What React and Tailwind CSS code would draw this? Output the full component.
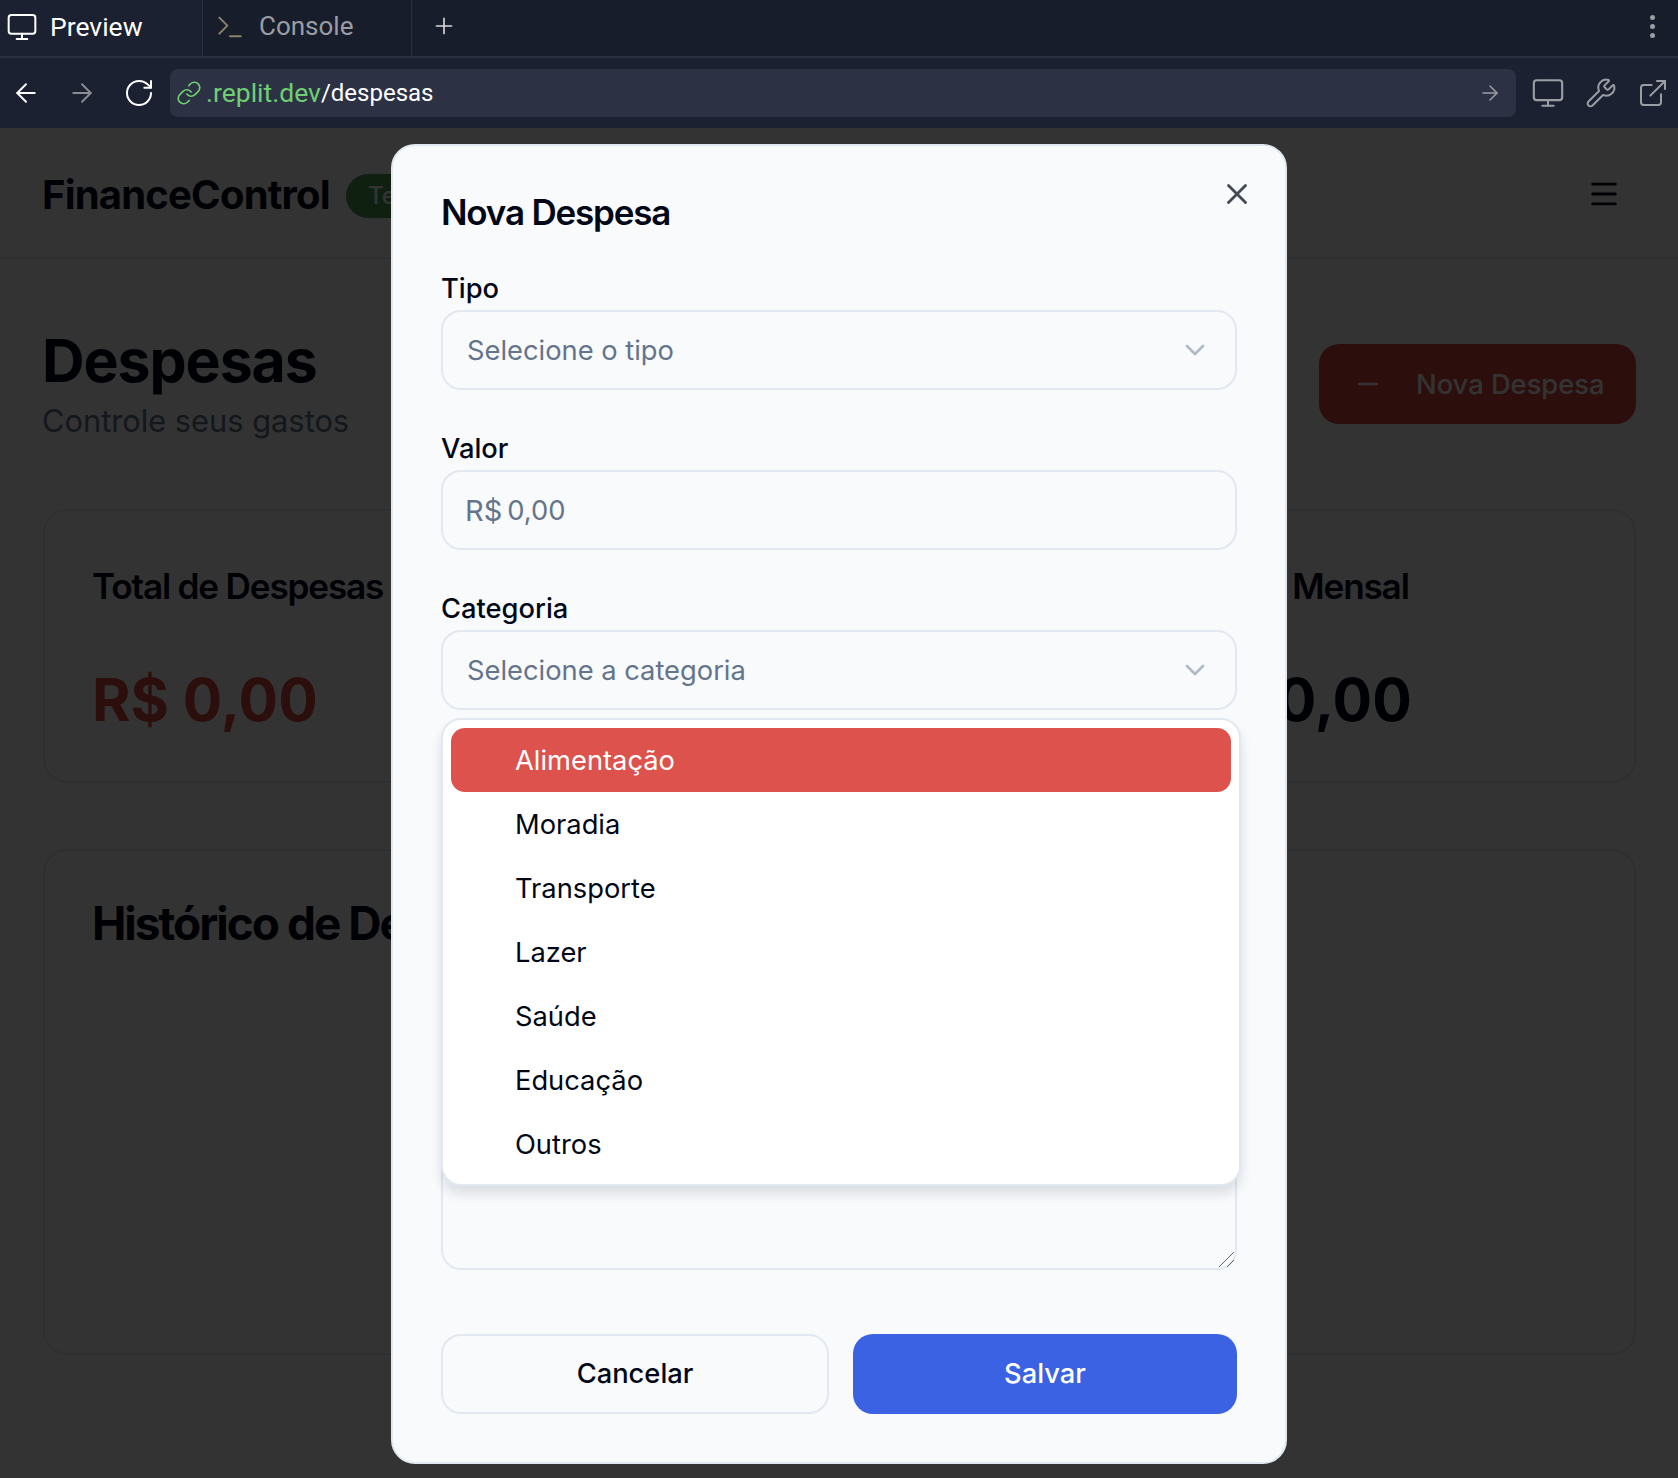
import { ArrowLeft, ArrowRight, ChevronDown, ExternalLink, Link, Menu, Minus, Monitor, Plus, RotateCw, Terminal, Wrench, X } from 'lucide-react';

const categorias = ['Alimentação', 'Moradia', 'Transporte', 'Lazer', 'Saúde', 'Educação', 'Outros'];

const Field = ({ label, children }) => (
    <div>
        <label className="block h-[40px] text-[27.3px] leading-[38px] font-medium text-[#020817]">{label}</label>
        {children}
    </div>
);

const SelectBox = ({ placeholder }) => (
    <div className="h-[80px] pl-[24px] pr-[24px] flex items-center justify-between rounded-[20px] border-2 border-[#e2e8f0] text-[27.3px] text-[#64748b]">
        <span className="pt-[2px]">{placeholder}</span>
        <ChevronDown size={32} strokeWidth={2} className="text-[#b1b9c6]" />
    </div>
);

const BrowserChrome = () => (
    <div className="bg-[#1c2132] font-['Roboto',sans-serif]">
        <div className="h-[58px] flex bg-[#181d2b] border-b-2 border-[#2b3040]">
            <div className="w-[202px] pb-[3px] bg-[#1c2132] flex items-center pl-[6px] gap-[12px] text-white text-[26.5px]">
                <Monitor size={32} strokeWidth={1.5} />
                <span>Preview</span>
            </div>
            <div className="w-[210px] pb-[3px] flex items-center pl-[11px] gap-[13px] border-l border-r border-[#2b3040] text-[#9a9da3] text-[26px]">
                <Terminal size={32} strokeWidth={1.5} className="text-[#8b8367]" />
                <span>Console</span>
            </div>
            <div className="pb-[4px] flex items-center pl-[19px] text-[#d9dadd]">
                <Plus size={26} strokeWidth={1.5} />
            </div>
            <div className="ml-auto pb-[4px] flex flex-col justify-center gap-[4px] pr-[23px]">
                <span className="w-[5px] h-[5px] rounded-full bg-[#9a9da3]" />
                <span className="w-[5px] h-[5px] rounded-full bg-[#9a9da3]" />
                <span className="w-[5px] h-[5px] rounded-full bg-[#9a9da3]" />
            </div>
        </div>
        <div className="h-[70px] flex items-center">
            <div className="w-[170px] flex items-center pl-[11px] gap-[26px] text-white">
                <ArrowLeft size={30} strokeWidth={1.5} />
                <ArrowRight size={30} strokeWidth={1.5} className="text-[#8a8c92]" />
                <RotateCw size={32} strokeWidth={1.5} />
            </div>
            <div className="w-[1346px] h-[48px] rounded-[8px] bg-[#2c3144] flex items-center pl-[6px] pr-[14px]">
                <Link size={26} strokeWidth={1.5} className="text-[#6fcf73]" />
                <span className="ml-[4px] text-[26.5px] text-[#6fcf73]">.replit.dev</span>
                <span className="text-[24px] text-white">/despesas</span>
                <ArrowRight size={24} strokeWidth={1.5} className="ml-auto text-[#9a9da3]" />
            </div>
            <div className="flex-1 flex items-center pl-[15px] gap-[20px] text-[#9a9da3]">
                <Monitor size={34} strokeWidth={1.5} />
                <Wrench size={32} strokeWidth={1.5} />
                <ExternalLink size={32} strokeWidth={1.5} />
            </div>
        </div>
    </div>
);

const Background = () => (
    <div className="h-[1350px] bg-white text-[#020817] font-['Inter',sans-serif]">
        <div className="h-[131px] flex items-center pl-[42px] pr-[57px] border-b-2 border-[#e2e8f0]">
            <div className="flex items-center mt-[5px]">
                <span className="text-[40px] font-bold tracking-[-0.8px]">FinanceControl</span>
                <span className="ml-[16px] mt-[2px] h-[44px] px-[22px] flex items-center rounded-full bg-[#4f9f52] text-white text-[24px] font-medium">Teste</span>
            </div>
            <Menu size={34} className="ml-auto mt-[3px]" />
        </div>
        <div className="pl-[43px] pr-[42px]">
            <div className="pt-[66px] flex justify-between">
                <div>
                    <h1 className="text-[59px] leading-[72px] font-bold tracking-[-1.1px] -ml-[1px]">Despesas</h1>
                    <p className="mt-[4px] text-[30.8px] leading-[40px] text-[#64748b] -ml-[1px]">Controle seus gastos</p>
                </div>
                <button className="mt-[19px] w-[317px] h-[80px] rounded-[20px] bg-[#dc4a3f] text-white flex items-center pl-[34px] gap-[33px] text-[27.3px] font-medium">
                    <Minus size={30} />
                    <span className="pt-[2px]">Nova Despesa</span>
                </button>
            </div>
            <div className="mt-[68px] grid grid-cols-3 gap-[48px]">
                <div className="h-[274px] rounded-[24px] border-2 border-[#e2e8f0] px-[47px] pt-[49px]">
                    <h3 className="text-[35.2px] font-semibold tracking-[-1.2px] whitespace-nowrap">Total de Despesas</h3>
                    <p className="mt-[43px] text-[58.7px] font-bold text-[#dc4a3f]">R$ 0,00</p>
                </div>
                <div className="h-[274px] rounded-[24px] border-2 border-[#e2e8f0]" />
                <div className="h-[274px] rounded-[24px] border-2 border-[#e2e8f0] px-[47px] pt-[49px]">
                    <h3 className="text-[35.2px] font-semibold tracking-[-1.2px]">Média Mensal</h3>
                    <p className="mt-[43px] text-[58.7px] font-bold">R$ 0,00</p>
                </div>
            </div>
            <div className="mt-[66px] h-[506px] rounded-[24px] border-2 border-[#e2e8f0] px-[47px] pt-[38px]">
                <h2 className="text-[46px] font-bold tracking-[-2px]">Histórico de Despesas</h2>
            </div>
        </div>
    </div>
);

const App = () => {
    return (
        <div className="relative w-[1678px] h-[1478px] overflow-hidden">
            <BrowserChrome />
            <div className="relative h-[1350px]">
                <Background />
                <div className="absolute inset-0 bg-black/80" />
                <div className="absolute left-[391px] top-[16px] w-[896px] h-[1320px] rounded-[24px] border-2 border-[#e2e8f0] bg-[#f8fafc] px-[48px] pt-[44px] font-['Inter',sans-serif]">
                    <h2 className="h-[80px] text-[35px] leading-[44px] font-semibold tracking-[-1.2px] text-[#020817]">Nova Despesa</h2>
                    <X size={34} className="absolute right-[31px] top-[31px] text-[#454955]" />
                    <div className="flex flex-col gap-[40px]">
                        <Field label="Tipo"><SelectBox placeholder="Selecione o tipo" /></Field>
                        <Field label="Valor">
                            <div className="h-[80px] pl-[22px] pt-[2px] flex items-baseline items-center gap-[5px] rounded-[20px] border-2 border-[#e2e8f0] text-[#64748b]">
                                <span className="text-[29px]">R$</span>
                                <span className="text-[27.3px]">0,00</span>
                            </div>
                        </Field>
                        <Field label="Categoria"><SelectBox placeholder="Selecione a categoria" /></Field>
                        <div className="relative">
                            <textarea className="block w-full h-[520px] rounded-[20px] border-2 border-[#e2e8f0] bg-transparent resize-none" />
                            <svg className="absolute right-[2px] bottom-[2px] w-[18px] h-[18px] text-[#666666]" viewBox="0 0 18 18" fill="none" stroke="currentColor" strokeWidth="1">
                                <path d="M2 17 17 2" />
                                <path d="M10 17 17 10" />
                            </svg>
                        </div>
                    </div>
                    <div className="mt-[64px] grid grid-cols-[388px_384px] gap-[24px] text-[27.3px] font-medium">
                        <button className="h-[80px] pt-[1px] rounded-[20px] border-2 border-[#e2e8f0] text-[#020817]">Cancelar</button>
                        <button className="h-[80px] pt-[1px] rounded-[20px] bg-[#3a62e2] text-white">Salvar</button>
                    </div>
                    <div className="absolute left-[48px] top-[572px] w-[800px] h-[468px] p-[8px] rounded-[20px] border-2 border-[#e2e8f0] bg-white shadow-[0_8px_12px_rgba(15,23,42,0.12)] text-[27.3px] text-[#020817]">
                        {categorias.map((c, i) => (
                            <div key={c} className={`h-[64px] pl-[64px] pt-[2px] flex items-center rounded-[14px] ${i === 0 ? 'bg-[#dd524c] text-white' : ''}`}>{c}</div>
                        ))}
                    </div>
                </div>
            </div>
        </div>
    );
};

export default App;
